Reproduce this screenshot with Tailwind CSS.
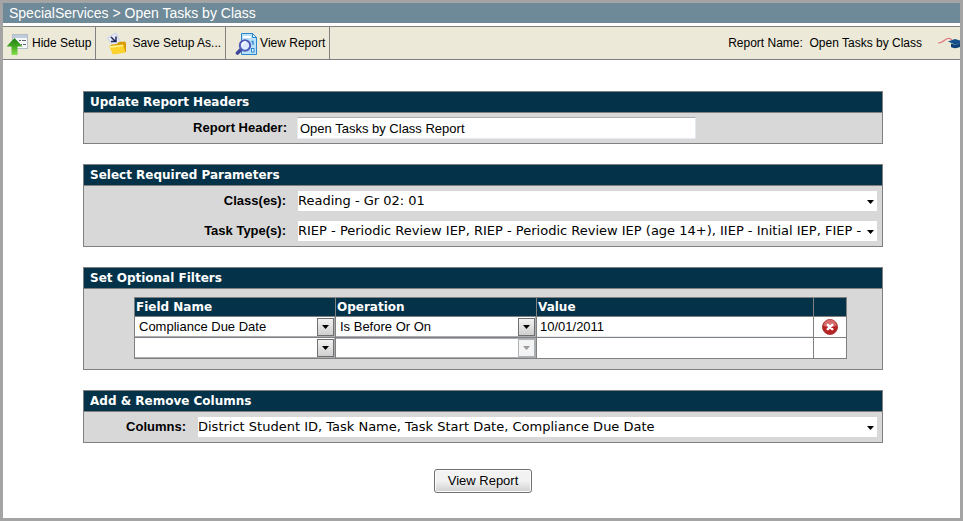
<!DOCTYPE html>
<html lang="en">
  <head>
    <meta charset="UTF-8" />
    <meta name="viewport" content="width=device-width, initial-scale=1.0" />
    <title>Open Tasks by Class</title>
    <script src="https://cdn.jsdelivr.net/npm/@tailwindcss/browser@4"></script>
  </head>
  <body class="min-h-screen border-3 border-[#a4a4a4] bg-white font-['Liberation_Sans',Arial,sans-serif] text-[13px] text-black">
    <!-- Breadcrumb -->
    <header class="bg-[#6e8997] px-1.5 text-sm leading-5 text-white">
      <h1>SpecialServices &gt; Open Tasks by Class</h1>
    </header>

    <!-- Toolbar -->
    <nav class="mt-[3px] flex h-[34px] items-stretch border-y border-[#808080] bg-[#ece9d8] text-xs">
      <button type="button" class="flex items-center gap-[3px] border-r border-[#808080] pr-1 pl-1 whitespace-nowrap">
        <svg class="h-6 w-[22px]" viewBox="0 0 22 24">
          <defs>
            <linearGradient id="arrowFill" x1="0" y1="0" x2="0" y2="1">
              <stop offset="0" stop-color="#1f7d14" />
              <stop offset="0.5" stop-color="#45a824" />
              <stop offset="1" stop-color="#86e04c" />
            </linearGradient>
          </defs>
          <rect x="5.500" y="3.500" width="15" height="14" fill="#f6f7f8" stroke="#b3bdc6" />
          <rect x="6" y="4" width="14" height="3" fill="#bfccdb" />
          <path d="M12 9.500h2M15 9.500h4M14 13.500h1M16 13.500h3" stroke="#5d656b" />
          <path d="M7.500 7 15.500 15.500H10.500V24H4.500V15.500H-.5Z" fill="url(#arrowFill)" />
        </svg>
        Hide Setup
      </button>
      <button type="button" class="flex items-center gap-1 border-r border-[#808080] pr-1 pl-2.5 whitespace-nowrap">
        <svg class="h-6 w-[22px]" viewBox="0 0 22 24">
          <path d="M1.500 7 10 2 14.500 11 7 15Z" fill="#e6eafb" stroke="#c9cfec" />
          <path d="M5 6 9 10M10 5.500V10.500H5" fill="none" stroke="#1b2450" stroke-width="1.500" />
          <path d="M4 15 6 13.500 11 13 12.500 11 19 10.500 20 12V21L7 23Z" fill="#d99d04" />
          <path d="M3 15 17 13.500 19.500 21.500 7 23.500Z" fill="#fbd32c" />
          <path d="M3.500 15.200 17 13.800l.4 1.400L4.200 17Z" fill="#fff08a" />
        </svg>
        Save Setup As...
      </button>
      <button type="button" class="flex items-center gap-0.5 border-r border-[#808080] pr-1 pl-2 whitespace-nowrap">
        <svg class="h-6 w-6" viewBox="0 0 24 24">
          <path d="M7.500 2.500h11l4 4v17h-15Z" fill="#b9e2fa" stroke="#2b86cc" />
          <path d="M18.500 2.500v4h4Z" fill="#eaf7ff" stroke="#2b86cc" />
          <path d="M9 6h8" stroke="#fff" stroke-width="2" />
          <path d="M17.500 10.500H19V14" stroke="#2b86cc" stroke-width="1.300" fill="none" />
          <rect x="17.500" y="17.500" width="2.500" height="3.500" fill="#eaf7ff" stroke="#2b86cc" />
          <path d="M7 18.500 3.500 22" stroke="#3f479c" stroke-width="3.600" stroke-linecap="round" />
          <circle cx="11" cy="14.500" r="5.200" fill="#dcebff" stroke="#4f5cb8" stroke-width="2" />
          <path d="M8 14a3.500 3.500 0 0 1 4-3" fill="none" stroke="#fff" stroke-width="1.500" />
        </svg>
        View Report
      </button>
      <div class="ml-auto flex items-center whitespace-nowrap">
        <span>Report Name:&nbsp; Open Tasks by Class</span>
        <svg class="ml-4 h-3 w-[22px]" viewBox="0 0 22 12">
          <path d="M0 6C3 6 4 5.500 7 3S12 1 14 3" fill="none" stroke="#e2737c" stroke-width="1.200" />
          <path d="M10 4.500 17 2l9 2.500-8 3.500Z" fill="#14508c" />
          <path d="M13 6.500v3.500c2 1.500 6 1.500 9 0V6L18 8Z" fill="#0d3f78" />
        </svg>
      </div>
    </nav>

    <main class="flex flex-col gap-5 pt-[31px] pr-[77px] pl-20">
      <section class="border border-[#808080] bg-[#d8d8d8]">
        <h2 class="border-b border-[#808080] bg-[#043249] px-1.5 font-['DejaVu_Sans',Verdana,sans-serif] text-xs leading-5 font-bold text-white">Update Report Headers</h2>
        <div class="flex h-[30px] items-center">
          <label for="reportHeader" class="w-[213px] pr-2.5 text-right font-bold">Report Header:</label>
          <input id="reportHeader" type="text" value="Open Tasks by Class Report" class="h-[22px] w-1/2 border border-[#e3e9ef] border-t-[#abadb3] bg-white px-0.5" />
        </div>
      </section>

      <section class="border border-[#808080] bg-[#d8d8d8]">
        <h2 class="border-b border-[#808080] bg-[#043249] px-1.5 font-['DejaVu_Sans',Verdana,sans-serif] text-xs leading-5 font-bold text-white">Select Required Parameters</h2>
        <div class="flex h-[30px] items-center pr-[5px]">
          <label for="classes" class="w-[214px] pr-3 text-right font-bold">Class(es):</label>
          <div class="relative min-w-0 flex-1">
            <select id="classes" class="block h-5 w-full appearance-none bg-white pr-[15px] font-['DejaVu_Sans',Verdana,sans-serif] text-[13px]">
              <option>Reading - Gr 02: 01</option>
            </select>
            <svg class="pointer-events-none absolute top-[9px] right-[3px] h-1 w-[7px]" viewBox="0 0 7 4"><path d="M0 0h7L3.500 4Z" /></svg>
          </div>
        </div>
        <div class="flex h-[30px] items-center pr-[5px]">
          <label for="taskTypes" class="w-[214px] pr-3 text-right font-bold">Task Type(s):</label>
          <div class="relative min-w-0 flex-1">
            <select id="taskTypes" class="block h-5 w-full appearance-none bg-white pr-[15px] font-['DejaVu_Sans',Verdana,sans-serif] text-[13px]">
              <option>RIEP - Periodic Review IEP, RIEP - Periodic Review IEP (age 14+), IIEP - Initial IEP, FIEP - Final IEP</option>
            </select>
            <svg class="pointer-events-none absolute top-[9px] right-[3px] h-1 w-[7px]" viewBox="0 0 7 4"><path d="M0 0h7L3.500 4Z" /></svg>
          </div>
        </div>
      </section>

      <section class="border border-[#808080] bg-[#d8d8d8]">
        <h2 class="border-b border-[#808080] bg-[#043249] px-1.5 font-['DejaVu_Sans',Verdana,sans-serif] text-xs leading-5 font-bold text-white">Set Optional Filters</h2>
        <div class="pt-2 pr-[35px] pb-2.5 pl-[50px]">
          <table class="w-full table-fixed border-collapse bg-white">
            <colgroup>
              <col class="w-[201px]" />
              <col class="w-[201px]" />
              <col />
              <col class="w-[33px]" />
            </colgroup>
            <thead>
              <tr class="bg-[#043249] text-left font-['DejaVu_Sans',Verdana,sans-serif] text-xs leading-[18px] text-white">
                <th class="border border-[#808080] px-px py-0">Field Name</th>
                <th class="border border-[#808080] px-px py-0">Operation</th>
                <th class="border border-[#808080] px-px py-0">Value</th>
                <th class="border border-[#808080] p-0"></th>
              </tr>
            </thead>
            <tbody>
              <tr>
                <td class="border border-[#808080] p-0">
                  <div class="relative">
                    <select aria-label="Field name 1" class="block h-5 w-full appearance-none border-r border-b border-[#abadb3] bg-white pr-5 pl-1">
                      <option>Compliance Due Date</option>
                    </select>
                    <span class="pointer-events-none absolute top-px right-px flex h-[18px] w-[17px] items-center justify-center border border-[#707070] bg-linear-to-b from-[#f2f2f2] to-[#cfcfcf]">
                      <svg class="h-1 w-[7px]" viewBox="0 0 7 4"><path d="M0 0h7L3.500 4Z" /></svg>
                    </span>
                  </div>
                </td>
                <td class="border border-[#808080] p-0">
                  <div class="relative">
                    <select aria-label="Operation 1" class="block h-5 w-full appearance-none border-r border-b border-[#abadb3] bg-white pr-5 pl-1">
                      <option>Is Before Or On</option>
                    </select>
                    <span class="pointer-events-none absolute top-px right-px flex h-[18px] w-[17px] items-center justify-center border border-[#707070] bg-linear-to-b from-[#f2f2f2] to-[#cfcfcf]">
                      <svg class="h-1 w-[7px]" viewBox="0 0 7 4"><path d="M0 0h7L3.500 4Z" /></svg>
                    </span>
                  </div>
                </td>
                <td class="border border-[#808080] p-0">
                  <input type="text" aria-label="Value 1" value="10/01/2011" class="block h-5 w-full border-b border-[#e3e9ef] px-[3px]" />
                </td>
                <td class="border border-[#808080] p-0">
                  <button type="button" aria-label="Remove filter" class="mx-auto block">
                    <svg class="h-4 w-4" viewBox="0 0 16 16">
                      <circle cx="8" cy="8" r="7.500" fill="#b92222" stroke="#a83a3a" />
                      <path d="M1.500 7a6.500 6.500 0 0 1 13 0Q8 9 1.500 7Z" fill="#d46a6a" />
                      <path d="M5.800 5.800 10.200 10.200M10.200 5.800 5.800 10.200" stroke="#fff" stroke-width="2.600" stroke-linecap="round" />
                    </svg>
                  </button>
                </td>
              </tr>
              <tr>
                <td class="border border-[#808080] p-0">
                  <div class="relative">
                    <select aria-label="Field name 2" class="block h-5 w-full appearance-none border-r border-b border-[#abadb3] bg-white pr-5 pl-1">
                      <option></option>
                    </select>
                    <span class="pointer-events-none absolute top-px right-px flex h-[18px] w-[17px] items-center justify-center border border-[#707070] bg-linear-to-b from-[#f2f2f2] to-[#cfcfcf]">
                      <svg class="h-1 w-[7px]" viewBox="0 0 7 4"><path d="M0 0h7L3.500 4Z" /></svg>
                    </span>
                  </div>
                </td>
                <td class="border border-[#808080] p-0">
                  <div class="relative">
                    <select disabled aria-label="Operation 2" class="block h-5 w-full appearance-none border-t border-r border-b border-[#abadb3] bg-white pr-5 pl-1">
                      <option></option>
                    </select>
                    <span class="pointer-events-none absolute top-px right-px flex h-[18px] w-[17px] items-center justify-center border border-[#adb2b5] bg-[#f4f4f4]">
                      <svg class="h-1 w-[7px]" viewBox="0 0 7 4"><path d="M0 0h7L3.500 4Z" fill="#9a9a9a" /></svg>
                    </span>
                  </div>
                </td>
                <td class="border border-[#808080] p-0">
                  <input type="text" aria-label="Value 2" class="block h-5 w-full px-[3px]" />
                </td>
                <td class="border border-[#808080] p-0"></td>
              </tr>
            </tbody>
          </table>
        </div>
      </section>

      <section class="border border-[#808080] bg-[#d8d8d8]">
        <h2 class="border-b border-[#808080] bg-[#043249] px-1.5 font-['DejaVu_Sans',Verdana,sans-serif] text-xs leading-5 font-bold text-white">Add &amp; Remove Columns</h2>
        <div class="flex h-[30px] items-center pr-[5px]">
          <label for="columns" class="w-[114px] pr-3 text-right font-bold">Columns:</label>
          <div class="relative min-w-0 flex-1">
            <select id="columns" class="block h-5 w-full appearance-none bg-white pr-[15px] font-['DejaVu_Sans',Verdana,sans-serif] text-[13px]">
              <option>District Student ID, Task Name, Task Start Date, Compliance Due Date</option>
            </select>
            <svg class="pointer-events-none absolute top-[9px] right-[3px] h-1 w-[7px]" viewBox="0 0 7 4"><path d="M0 0h7L3.500 4Z" /></svg>
          </div>
        </div>
      </section>

      <button type="submit" class="mt-1.5 h-6 self-center rounded-[3px] border border-[#707070] bg-linear-to-b from-[#f2f2f2] from-50% to-[#cfcfcf] px-[13px] inset-ring inset-ring-[#fcfcfc]">View Report</button>
    </main>
  </body>
</html>
